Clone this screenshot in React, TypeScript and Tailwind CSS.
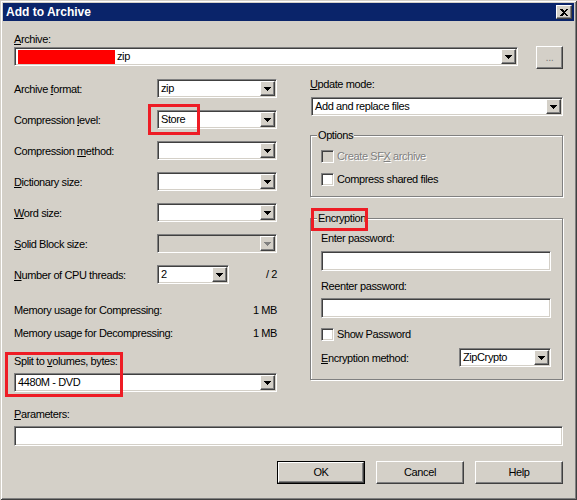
import React from 'react';
import clsx from 'clsx';

// classic 3D edges
const sunken =
  'border border-t-[#808080] border-l-[#808080] border-b-white border-r-white shadow-[inset_1px_1px_0_#404040,inset_-1px_-1px_0_#d4d0c8]';
const raised =
  'border border-t-white border-l-white border-b-[#404040] border-r-[#404040] shadow-[inset_-1px_-1px_0_#808080]';

function Arrow({ disabled }: { disabled?: boolean }) {
  const fill = disabled ? '#808080' : '#000';
  return (
    <svg width="7" height="4" viewBox="0 0 7 4" shapeRendering="crispEdges" className="block">
      <rect x="0" y="0" width="7" height="1" fill={fill} />
      <rect x="1" y="1" width="5" height="1" fill={fill} />
      <rect x="2" y="2" width="3" height="1" fill={fill} />
      <rect x="3" y="3" width="1" height="1" fill={fill} />
    </svg>
  );
}

function Combo({
  children,
  className,
  disabled,
}: {
  children?: React.ReactNode;
  className?: string;
  disabled?: boolean;
}) {
  return (
    <div
      className={clsx(
        'flex h-[19px] items-center p-[1px]',
        sunken,
        disabled ? 'bg-[#d4d0c8]' : 'bg-white',
        className,
      )}
    >
      <div className="flex min-w-0 flex-1 items-center overflow-hidden whitespace-nowrap pl-[2px]">{children}</div>
      <div className={clsx('flex h-full w-[15px] shrink-0 items-center justify-center bg-[#d4d0c8]', raised)}>
        <Arrow disabled={disabled} />
      </div>
    </div>
  );
}

function TextBox({ className }: { className?: string }) {
  return <div className={clsx('h-[20px] bg-white', sunken, className)} />;
}

function Check({ label, disabled }: { label: React.ReactNode; disabled?: boolean }) {
  return (
    <div className="flex h-[13px] items-center">
      <div className={clsx('h-[13px] w-[13px] shrink-0', sunken, disabled ? 'bg-[#d4d0c8]' : 'bg-white')} />
      <span className={clsx('ml-[3px]', disabled && 'text-[#808080] [text-shadow:1px_1px_0_#fff]')}>{label}</span>
    </div>
  );
}

function Group({ title, className, children }: { title: string; className?: string; children: React.ReactNode }) {
  return (
    <div className={clsx('relative border border-[#808080] shadow-[inset_1px_1px_0_#fff,1px_1px_0_#fff]', className)}>
      <span className="absolute left-[6px] top-[-7px] bg-[#d4d0c8] px-[1px] leading-[13px]">{title}</span>
      {children}
    </div>
  );
}

function Button({ children, isDefault }: { children: React.ReactNode; isDefault?: boolean }) {
  return (
    <div className={clsx('h-[23px] w-[88px]', isDefault && 'border border-black')}>
      <div className={clsx('flex h-full w-full items-center justify-center bg-[#d4d0c8]', raised)}>{children}</div>
    </div>
  );
}

const U = ({ children }: { children: React.ReactNode }) => <span className="underline underline-offset-[1px]">{children}</span>;

function Row({ label, children }: { label: React.ReactNode; children: React.ReactNode }) {
  return (
    <div className="flex h-[19px] items-center">
      <div className="w-[143px] shrink-0 pt-[1px]">{label}</div>
      {children}
    </div>
  );
}

export default function App() {
  return (
    <div className="relative h-[500px] w-[577px] overflow-hidden bg-[#d4d0c8] p-[3px] font-['Liberation_Sans',Arial,sans-serif] text-[11px] leading-[13px] tracking-[-0.4px] text-black shadow-[inset_1px_1px_0_#d4d0c8,inset_-1px_-1px_0_#404040,inset_2px_2px_0_#fff,inset_-2px_-2px_0_#808080]">
      {/* title bar */}
      <div className="flex h-[18px] items-center bg-[#0a246a] pl-[3px] pr-[2px]">
        <span className="text-[12px] font-bold tracking-normal text-white">Add to Archive</span>
        <div className={clsx('ml-auto flex h-[14px] w-[16px] items-center justify-center bg-[#d4d0c8]', raised)}>
          <svg width="8" height="7" viewBox="0 0 8 7" shapeRendering="crispEdges">
            <path d="M0 0h2l2 2 2-2h2L5 3.5 8 7H6L4 5 2 7H0l3-3.5z" fill="#000" />
          </svg>
        </div>
      </div>

      <div className="px-[11px]">
        {/* archive */}
        <div className="mt-[12px]">
          <U>A</U>rchive:
        </div>
        <div className="flex items-start">
          <Combo className="mt-[1px] w-[504px]">
            <span className="mr-[2px] inline-block h-[14px] w-[97px] bg-[#ff0000]" />
            <span>zip</span>
          </Combo>
          <div className={clsx('ml-auto flex h-[23px] w-[27px] items-center justify-center bg-[#d4d0c8] text-[#808080]', raised)}>
            ...
          </div>
        </div>

        {/* middle */}
        <div className="mt-[8px] flex">
          <div className="w-[263px] pt-[2px]">
            <div className="flex flex-col gap-[12px]">
              <Row label={<>Archive <U>f</U>ormat:</>}>
                <Combo className="w-[120px]">zip</Combo>
              </Row>
              <Row label={<>Compression <U>l</U>evel:</>}>
                <Combo className="w-[120px]">Store</Combo>
              </Row>
              <Row label={<>Compression <U>m</U>ethod:</>}>
                <Combo className="w-[120px]" />
              </Row>
              <Row label={<><U>D</U>ictionary size:</>}>
                <Combo className="w-[120px]" />
              </Row>
              <Row label={<><U>W</U>ord size:</>}>
                <Combo className="w-[120px]" />
              </Row>
              <Row label={<><U>S</U>olid Block size:</>}>
                <Combo className="w-[120px]" disabled />
              </Row>
              <Row label={<><U>N</U>umber of CPU threads:</>}>
                <Combo className="w-[72px]">2</Combo>
                <span className="ml-auto">/ 2</span>
              </Row>
            </div>
            <div className="mt-[20px] flex justify-between">
              <span>Memory usage for Compressing:</span>
              <span>1 MB</span>
            </div>
            <div className="mt-[10px] flex justify-between">
              <span>Memory usage for Decompressing:</span>
              <span>1 MB</span>
            </div>
            <div className="mt-[15px]">
              Split to <U>v</U>olumes, bytes:
            </div>
            <Combo className="mt-[5px] w-full">4480M - DVD</Combo>
          </div>

          <div className="ml-[33px] flex-1">
            <div className="mt-[1px]">
              <U>U</U>pdate mode:
            </div>
            <Combo className="ml-[1px] mt-[6px]">Add and replace files</Combo>

            <Group title="Options" className="mt-[19px] flex h-[62px] flex-col gap-[10px] pl-[10px] pt-[14px]">
              <Check disabled label={<>Create SF<U>X</U> archive</>} />
              <Check label="Compress shared files" />
            </Group>

            <Group title="Encryption" className="mt-[21px] h-[162px] pl-[10px] pr-[11px] pt-[13px]">
              <div>Enter password:</div>
              <TextBox className="mt-[6px]" />
              <div className="mt-[9px]">Reenter password:</div>
              <TextBox className="mt-[5px]" />
              <div className="mt-[10px]">
                <Check label="Show Password" />
              </div>
              <div className="mt-[7px] flex h-[19px] items-center">
                <span className="pt-[1px]">
                  <U>E</U>ncryption method:
                </span>
                <Combo className="ml-auto w-[92px]">ZipCrypto</Combo>
              </div>
            </Group>
          </div>
        </div>

        {/* bottom */}
        <div className="mt-[16px]">
          <U>P</U>arameters:
        </div>
        <TextBox className="mt-[5px]" />
        <div className="mt-[15px] flex justify-end gap-[11px]">
          <Button isDefault>OK</Button>
          <Button>Cancel</Button>
          <Button>Help</Button>
        </div>
      </div>

      {/* red annotation boxes */}
      <div className="absolute left-[148px] top-[104px] h-[31px] w-[52px] border-[3px] border-[#ee1c25]" />
      <div className="absolute left-[311px] top-[208px] h-[23px] w-[57px] border-[3px] border-[#ee1c25]" />
      <div className="absolute left-[5px] top-[352px] h-[45px] w-[118px] border-[3px] border-[#ee1c25]" />
    </div>
  );
}
